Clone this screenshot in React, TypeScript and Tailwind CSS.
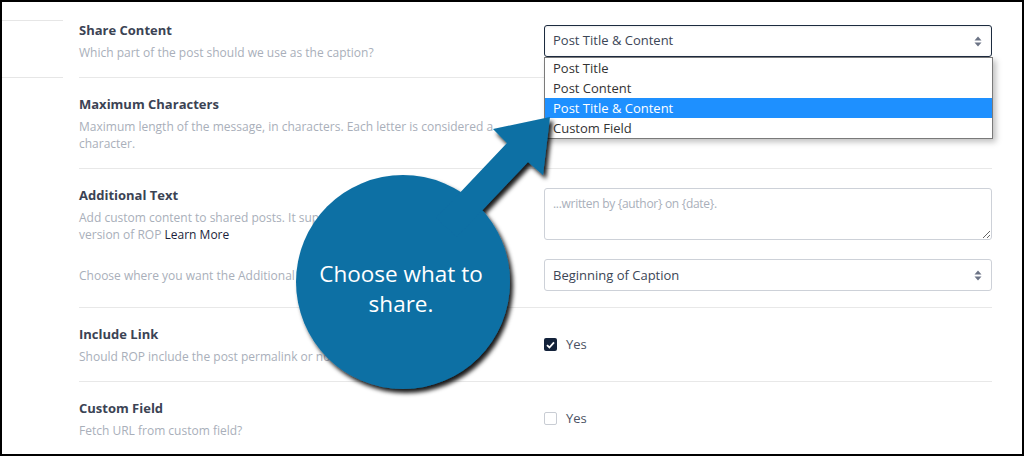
import * as React from "react"

const font = { fontFamily: '"Open Sans", "Noto Sans", Arial, sans-serif' }

function Label({ children }: { children: React.ReactNode }) {
  return <div className="text-[13px] font-bold leading-5 text-[#3b4354]">{children}</div>
}

function Desc({ children }: { children: React.ReactNode }) {
  return <div className="mt-1 text-[12px] leading-[17px] text-[#a9afba]">{children}</div>
}

function SelectArrows() {
  return (
    <svg width="8" height="11" viewBox="0 0 8 11" className="shrink-0">
      <path d="M4 0.5 L7.5 4.5 L0.5 4.5 Z" fill="#6b7385" />
      <path d="M4 10.5 L7.5 6.5 L0.5 6.5 Z" fill="#6b7385" />
    </svg>
  )
}

function Checkbox({ checked }: { checked?: boolean }) {
  return (
    <div className="flex items-center gap-[9px]">
      {checked ? (
        <div className="flex size-[13px] items-center justify-center rounded-[2px] bg-[#13223a]">
          <svg width="9" height="8" viewBox="0 0 9 8">
            <path d="M1 4.2 L3.4 6.5 L8 1.3" stroke="#fff" strokeWidth="1.8" fill="none" />
          </svg>
        </div>
      ) : (
        <div className="size-[13px] rounded-[2px] border border-[#c9cdd4] bg-white" />
      )}
      <span className="text-[13px] text-[#4b5263]">Yes</span>
    </div>
  )
}

const options = ["Post Title", "Post Content", "Post Title & Content", "Custom Field"]

export default function App() {
  return (
    <div className="relative h-[456px] w-[1024px] bg-black p-[2px]" style={font}>
      <div className="flex h-full w-full bg-white">
        {/* sidebar stub */}
        <div className="w-[61px] shrink-0">
          <div className="mt-[18px] h-px bg-[#e6e6e6]" />
          <div className="mt-[56px] h-px bg-[#e6e6e6]" />
        </div>

        <div className="ml-4 w-[913px] shrink-0">
          {/* Share Content */}
          <div className="flex items-center border-b border-[#e8e8e8] pt-[18px] pb-4">
            <div className="w-[465px] shrink-0">
              <Label>Share Content</Label>
              <Desc>Which part of the post should we use as the caption?</Desc>
            </div>
            <div className="relative flex-1">
              <div className="flex h-8 items-center justify-between rounded-[3px] border border-[#1c2b3f] pl-2 pr-[9px] pt-px text-[13px] text-[#3c4656] shadow-[inset_0_1px_2px_rgba(0,0,0,0.08)]">
                <span>Post Title &amp; Content</span>
                <SelectArrows />
              </div>
              <div className="absolute left-0 top-8 z-10 w-[449px] border border-[#7a7a7a] bg-white shadow-[3px_3px_6px_rgba(0,0,0,0.25)]">
                {options.map((o, i) => (
                  <div
                    key={o}
                    className={
                      i === 2
                        ? "h-5 bg-[#1e90ff] pl-2 text-[13px] leading-5 text-white"
                        : "h-5 pl-2 text-[13px] leading-5 text-[#333]"
                    }
                  >
                    {o}
                  </div>
                ))}
              </div>
            </div>
          </div>

          {/* Maximum Characters */}
          <div className="flex items-center border-b border-[#e8e8e8] py-4">
            <div className="w-[465px] shrink-0">
              <Label>Maximum Characters</Label>
              <Desc>
                Maximum length of the message, in characters. Each letter is considered a
                <br />
                character.
              </Desc>
            </div>
            <div className="flex-1" />
          </div>

          {/* Additional Text */}
          <div className="border-b border-[#e8e8e8] py-4">
            <div className="flex items-center">
              <div className="w-[465px] shrink-0">
                <Label>Additional Text</Label>
                <Desc>
                  Add custom content to shared posts. It supports tags in the Pro
                  <br />
                  version of ROP <a className="text-[#1b1f3b]">Learn More</a>
                </Desc>
              </div>
              <textarea
                className="h-[52px] flex-1 resize-y rounded-[3px] border border-[#cdd1d8] px-2 py-[6px] text-[12px] tracking-[-0.3px] text-[#3c4656] outline-none placeholder:text-[#a9afba]"
                placeholder="...written by {author} on {date}."
              />
            </div>
            <div className="mt-4 flex items-center">
              <div className="w-[465px] shrink-0 text-[12px] leading-[17px] text-[#a9afba]">
                Choose where you want the Additional Text to appear.
              </div>
              <div className="flex h-8 flex-1 items-center justify-between rounded-[3px] border border-[#cdd1d8] pl-2 pr-[9px] pt-px text-[13px] text-[#3c4656]">
                <span>Beginning of Caption</span>
                <SelectArrows />
              </div>
            </div>
          </div>

          {/* Include Link */}
          <div className="flex items-center border-b border-[#e8e8e8] py-4">
            <div className="w-[465px] shrink-0">
              <Label>Include Link</Label>
              <Desc>Should ROP include the post permalink or not?</Desc>
            </div>
            <Checkbox checked />
          </div>

          {/* Custom Field */}
          <div className="flex items-center py-4">
            <div className="w-[465px] shrink-0">
              <Label>Custom Field</Label>
              <Desc>Fetch URL from custom field?</Desc>
            </div>
            <Checkbox />
          </div>
        </div>
      </div>

      {/* callout overlay */}
      <svg className="pointer-events-none absolute left-0 top-0 z-20" width="1024" height="456" viewBox="0 0 1024 456">
        <defs>
          <filter id="sh" x="-20%" y="-20%" width="140%" height="140%">
            <feDropShadow dx="3" dy="4" stdDeviation="2" floodColor="#000" floodOpacity="0.9" />
          </filter>
        </defs>
        <g filter="url(#sh)" fill="#0b6fa4">
          <circle cx="403" cy="282" r="107" />
          <polygon points="436,218 507,143 493,129 550,117 543,175 528,162 457,237" />
        </g>
      </svg>
      <div className="pointer-events-none absolute left-[294px] top-[259px] z-30 w-[214px] text-center text-[22.5px] leading-[30px] text-white">
        Choose what to
        <br />
        share.
      </div>
    </div>
  )
}
